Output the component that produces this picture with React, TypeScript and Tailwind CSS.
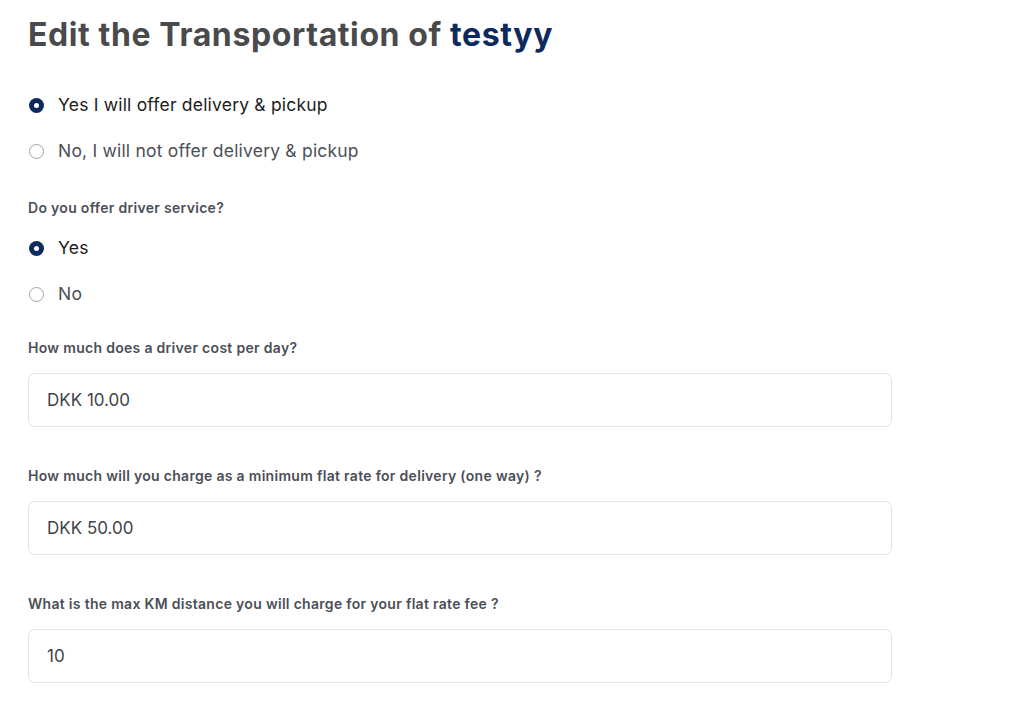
import { useState } from "react";

function Radio({
    checked,
    label,
    onSelect,
}: {
    checked: boolean;
    label: string;
    onSelect: () => void;
}) {
    return (
        <label
            onClick={onSelect}
            className="flex items-center gap-[14px] cursor-pointer h-[24px]"
        >
            {checked ? (
                <span className="w-[15px] h-[15px] rounded-full bg-[#0d2a5e] flex items-center justify-center">
                    <span className="w-[5px] h-[5px] rounded-full bg-white" />
                </span>
            ) : (
                <span className="w-[15px] h-[15px] rounded-full border-[1.5px] border-[#a3a3a3] bg-white" />
            )}
            <span
                className={
                    checked
                        ? "text-[17.5px] tracking-[0.2px] text-[#1c1c1c]"
                        : "text-[17.5px] tracking-[0.2px] text-[#4b4f58]"
                }
            >
                {label}
            </span>
        </label>
    );
}

function Field({ label, value }: { label: string; value: string }) {
    return (
        <div className="flex flex-col">
            <label className="text-[14px] tracking-[0.3px] font-semibold text-[#4b4f58] leading-[18px]">
                {label}
            </label>
            <input
                defaultValue={value}
                className="mt-[16px] h-[54px] w-[864px] px-[18px] text-[17px] text-[#3f434b] bg-white border border-[#e3e3ea] rounded-[7px] outline-none"
            />
        </div>
    );
}

export default function App() {
    const [delivery, setDelivery] = useState(true);
    const [driver, setDriver] = useState(true);

    return (
        <div
            className="min-h-screen bg-white px-[28px] pt-[14px]"
            style={{ fontFamily: "Inter, 'Open Sans', sans-serif" }}
        >
            <h1 className="text-[32px] font-bold text-[#4a4a4c] leading-[42px] tracking-[0.6px]">
                Edit the Transportation of{" "}
                <span className="text-[#0d2a5e]">testyy</span>
            </h1>

            <div className="mt-[37px] flex flex-col gap-[22px] pl-[1px]">
                <Radio
                    checked={delivery}
                    label="Yes I will offer delivery & pickup"
                    onSelect={() => setDelivery(true)}
                />
                <Radio
                    checked={!delivery}
                    label="No, I will not offer delivery & pickup"
                    onSelect={() => setDelivery(false)}
                />
            </div>

            <p className="mt-[36px] text-[14px] tracking-[0.3px] font-semibold text-[#4b4f58] leading-[18px]">
                Do you offer driver service?
            </p>

            <div className="mt-[19px] flex flex-col gap-[22px] pl-[1px]">
                <Radio checked={driver} label="Yes" onSelect={() => setDriver(true)} />
                <Radio checked={!driver} label="No" onSelect={() => setDriver(false)} />
            </div>

            <div className="mt-[33px] flex flex-col gap-[40px]">
                <Field label="How much does a driver cost per day?" value="DKK 10.00" />
                <Field
                    label="How much will you charge as a minimum flat rate for delivery (one way) ?"
                    value="DKK 50.00"
                />
                <Field
                    label="What is the max KM distance you will charge for your flat rate fee ?"
                    value="10"
                />
            </div>
        </div>
    );
}
